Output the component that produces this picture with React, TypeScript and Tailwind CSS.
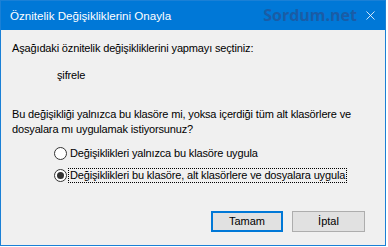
import { X } from "lucide-react";

const Radio = ({ checked }: { checked?: boolean }) => (
  <span className="flex h-[13px] w-[13px] shrink-0 items-center justify-center rounded-full border border-[#333333] bg-white">
    {checked && <span className="h-[7px] w-[7px] rounded-full bg-[#333333]" />}
  </span>
);

export default function App() {
  return (
    <div className="h-[247px] w-[388px] bg-white font-['Liberation_Sans',sans-serif] text-[11px] leading-[15px] text-black whitespace-nowrap">
      <div className="flex h-[246px] w-[386px] flex-col border border-[#1a80d6] bg-[#f0f0f0]">
        <div className="flex h-[29px] items-center bg-[#0078d7] pl-[9px] pr-[7px] text-white">
          <span className="text-[11.6px]">Öznitelik Değişikliklerini Onayla</span>
          <span className="ml-auto mr-[6px] font-['Open_Sans',sans-serif] text-[16px] font-bold text-[#1a5ca6]">
            Sordum.net
          </span>
          <X className="h-[15px] w-[15px]" strokeWidth={1.3} />
        </div>
        <div className="flex flex-1 flex-col px-[11px] pt-[11px] tracking-[-0.15px]">
          <p>Aşağıdaki öznitelik değişikliklerini yapmayı seçtiniz:</p>
          <p className="mt-[12px] pl-[45px]">şifrele</p>
          <div className="mt-[24px]">
            <p>Bu değişikliği yalnızca bu klasöre mi, yoksa içerdiği tüm alt klasörlere ve</p>
            <p>dosyalara mı uygulamak istiyorsunuz?</p>
          </div>
          <div className="mt-[9px] flex flex-col gap-[7px] pl-[42px]">
            <label className="flex items-center gap-[2px]">
              <Radio />
              <span className="px-[1px]">Değişiklikleri yalnızca bu klasöre uygula</span>
            </label>
            <label className="flex items-center gap-[1px]">
              <Radio checked />
              <span className="border border-dotted border-black px-[1px] leading-[13px]">
                Değişiklikleri bu klasöre, alt klasörlere ve dosyalara uygula
              </span>
            </label>
          </div>
          <div className="mt-auto mb-[13px] flex justify-end gap-[9px] pr-[9px] tracking-normal">
            <button className="h-[21px] w-[72px] border-2 border-[#0078d7] bg-[#e1e1e1] text-[11px]">
              Tamam
            </button>
            <button className="h-[21px] w-[73px] border border-[#adadad] bg-[#e1e1e1] text-[11px]">
              İptal
            </button>
          </div>
        </div>
      </div>
    </div>
  );
}
